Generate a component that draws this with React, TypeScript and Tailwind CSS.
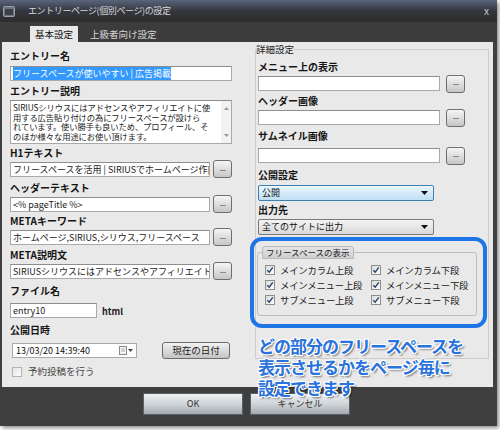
import type { ReactNode } from 'react'

const FONT = "font-['Noto_Sans_CJK_JP','Noto_Sans',sans-serif]"

function Label({ children, className = '' }: { children: ReactNode; className?: string }) {
	return <div className={`h-[14px] text-[10px] font-bold leading-[14px] text-[#151515] ${className}`}>{children}</div>
}

function TextBox({ children, className = '' }: { children?: ReactNode; className?: string }) {
	return (
		<div
			className={`h-[15px] overflow-hidden whitespace-nowrap border border-[#a9a9a9] border-t-[#8e8e8e] bg-white px-[2px] text-[9px] leading-[13px] text-[#1a1a1a] ${className}`}
		>
			{children}
		</div>
	)
}

function DotsButton() {
	return (
		<div className="flex h-[18px] w-[19px] shrink-0 items-center justify-center rounded-[3px] border border-[#6e6e6e] bg-linear-to-b from-[#f6f6f6] to-[#c6c6c6]">
			<span className="mt-[2px] h-px w-[6px] bg-[#8a8a8a]" />
		</div>
	)
}

function Check({ checked = true }: { checked?: boolean }) {
	return (
		<span className="flex h-[10px] w-[10px] shrink-0 items-center justify-center border border-[#8e8e8e] bg-linear-to-br from-[#dadada] to-white">
			{checked && (
				<svg width="8" height="8" viewBox="0 0 8 8">
					<path d="M1.3 4.2 L3.2 6.2 L6.8 1.4" fill="none" stroke="#2b3f6b" strokeWidth="1.4" />
				</svg>
			)}
		</span>
	)
}

function CheckItem({ label }: { label: string }) {
	return (
		<div className="flex items-center gap-[5px] whitespace-nowrap text-[9.4px] leading-[14px] tracking-[-0.2px] text-[#222]">
			<Check />
			{label}
		</div>
	)
}

function Select({ value, active = false }: { value: string; active?: boolean }) {
	return (
		<div
			className={`flex h-[16px] w-[176px] items-center justify-between rounded-[2px] border px-[3px] text-[9px] leading-[14px] text-[#111] ${
				active
					? 'border-[#3c7fb1] bg-linear-to-b from-[#eaf6fd] to-[#bfe0f5]'
					: 'border-[#7a7a7a] bg-linear-to-b from-[#f4f4f4] to-[#d9d9d9]'
			}`}
		>
			<span>{value}</span>
			<svg width="7" height="4" viewBox="0 0 7 4" className="mr-[2px]">
				<path d="M0 0 H7 L3.5 4 Z" fill="#111" />
			</svg>
		</div>
	)
}

function LeftColumn() {
	return (
		<div className="flex w-[222px] shrink-0 flex-col pt-[7px]">
			<Label>エントリー名</Label>
			<TextBox className="mt-[3px]">
				<span className="bg-[#3399ff] text-white">フリースペースが使いやすい | 広告掲載</span>
			</TextBox>

			<Label className="mt-[3px]">エントリー説明</Label>
			<div className="mt-[2px] flex h-[44px] border border-[#a9a9a9] border-t-[#8e8e8e] bg-white">
				<div className="flex-1 overflow-hidden whitespace-nowrap pl-[2px] pt-[2px] text-[8.3px] leading-[9.6px] tracking-[-0.1px] text-[#1a1a1a]">
					<div>SIRIUSシリウスにはアドセンスやアフィリエイトに使</div>
					<div>用する広告貼り付けの為にフリースペースが設けら</div>
					<div>れています。使い勝手も良いため、プロフィール、そ</div>
					<div>のほか様々な用途にお使い頂けます。</div>
				</div>
				<div className="flex w-[10px] shrink-0 flex-col items-center justify-between bg-[#f2f2f2] py-[6px]">
					<svg width="5" height="3" viewBox="0 0 5 3">
						<path d="M0 3 H5 L2.5 0 Z" fill="#9a9a9a" />
					</svg>
					<svg width="5" height="3" viewBox="0 0 5 3">
						<path d="M0 0 H5 L2.5 3 Z" fill="#9a9a9a" />
					</svg>
				</div>
			</div>

			<Label className="mt-[2px]">H1テキスト</Label>
			<div className="flex h-[18px] items-center justify-between">
				<TextBox className="w-[200px]">フリースペースを活用 | SIRIUSでホームページ作[</TextBox>
				<DotsButton />
			</div>

			<Label className="mt-[3px]">ヘッダーテキスト</Label>
			<div className="flex h-[18px] items-center justify-between">
				<TextBox className="w-[200px]">{'<% pageTitle %>'}</TextBox>
				<DotsButton />
			</div>

			<Label className="mt-[1px]">METAキーワード</Label>
			<div className="flex h-[18px] items-center justify-between">
				<TextBox className="w-[200px]">ホームページ,SIRIUS,シリウス,フリースペース</TextBox>
				<DotsButton />
			</div>

			<Label className="mt-[2px]">META説明文</Label>
			<div className="flex h-[18px] items-center justify-between">
				<TextBox className="w-[200px]">SIRIUSシリウスにはアドセンスやアフィリエイトに使</TextBox>
				<DotsButton />
			</div>

			<Label className="mt-[4px]">ファイル名</Label>
			<div className="mt-[4px] flex items-center gap-[5px]">
				<TextBox className="w-[87px]">entry10</TextBox>
				<span className="pt-[3px] text-[9px] font-bold text-[#222]">html</span>
			</div>

			<Label className="mt-[4px]">公開日時</Label>
			<div className="mt-[5px] flex h-[18px] items-center">
				<div className="ml-[2px] flex h-[15px] w-[125px] items-center justify-between border border-[#a9a9a9] bg-white pl-[3px] pr-[3px] text-[9px] leading-[13px] text-[#111]">
					<span>13/03/20 14:39:40</span>
					<span className="flex items-center gap-[1px]">
						<svg width="8" height="9" viewBox="0 0 8 9">
							<rect x="0.5" y="0.5" width="7" height="8" fill="#f4f4f4" stroke="#8a8a8a" />
							<path d="M2 3 H6 M2 5 H6" stroke="#b0b0b0" />
						</svg>
						<svg width="5" height="3" viewBox="0 0 5 3">
							<path d="M0 0 H5 L2.5 3 Z" fill="#444" />
						</svg>
					</span>
				</div>
				<div className="ml-[25px] flex h-[17px] w-[68px] items-center justify-center rounded-[3px] border border-[#6c6c6c] bg-linear-to-b from-[#f2f2f2] to-[#c4c4c4] text-[9.5px] text-[#222]">
					現在の日付
				</div>
			</div>

			<div className="mt-[5px] flex h-[14px] items-center gap-[6px] pl-[2px] text-[9.5px] text-[#444]">
				<span className="h-[10px] w-[10px] border border-[#b4b4b4] bg-linear-to-br from-[#e2e2e2] to-white" />
				予約投稿を行う
			</div>
		</div>
	)
}

function RightColumn() {
	return (
		<fieldset className="ml-[23px] mt-[1px] h-[316px] w-[234px] border border-[#cdcdcd] pl-[2px]">
			<legend className="ml-[-2px] px-0 text-[9.5px] leading-[12px] text-[#222]">詳細設定</legend>
			<div className="flex flex-col pt-[5px]">
				<Label>メニュー上の表示</Label>
				<div className="flex h-[19px] items-center">
					<TextBox className="w-[182px]" />
					<span className="ml-[6px]">
						<DotsButton />
					</span>
				</div>

				<Label className="mt-px">ヘッダー画像</Label>
				<div className="flex h-[19px] items-center">
					<TextBox className="w-[182px]" />
					<span className="ml-[6px]">
						<DotsButton />
					</span>
				</div>

				<Label className="mt-[2px]">サムネイル画像</Label>
				<div className="mt-[3px] flex h-[19px] items-center">
					<TextBox className="w-[182px]" />
					<span className="ml-[6px]">
						<DotsButton />
					</span>
				</div>

				<Label className="mt-[3px]">公開設定</Label>
				<div className="mt-[3px]">
					<Select value="公開" active />
				</div>

				<Label className="mt-[2px]">出力先</Label>
				<div className="mt-[2px]">
					<Select value="全てのサイトに出力" />
				</div>

				<div className="-ml-[8px] mt-[2px] h-[91px] w-[237px] rounded-[12px] border-4 border-[#1f74e6] pl-[3px] pt-[5px]">
					<fieldset className="h-[70px] w-[220px] rounded-[3px] border border-[#bdbdbd] pl-[7px] pt-[4px]">
						<legend className="ml-[-3px] rounded-t-[3px] border border-[#b9b9b9] bg-linear-to-b from-[#e4e4e4] to-[#cfcfcf] px-[3px] text-[8.5px] leading-[11px] text-[#222]">
							フリースペースの表示
						</legend>
						<div className="grid grid-cols-[106px_1fr] gap-y-[1px]">
							<CheckItem label="メインカラム上段" />
							<CheckItem label="メインカラム下段" />
							<CheckItem label="メインメニュー上段" />
							<CheckItem label="メインメニュー下段" />
							<CheckItem label="サブメニュー上段" />
							<CheckItem label="サブメニュー下段" />
						</div>
					</fieldset>
				</div>
			</div>
		</fieldset>
	)
}

export default function App() {
	return (
		<div className={`relative h-[430px] w-[500px] overflow-hidden bg-white ${FONT}`}>
			<div className="flex h-[426px] w-[497px] flex-col bg-[#3f3f3f] shadow-[2px_2px_4px_rgba(0,0,0,0.45)]">
				{/* title bar */}
				<div className="flex h-[22px] items-center bg-linear-to-b from-[#5a647c] via-[#34373e] to-[#2c2c2c] pl-[3px] pr-[8px]">
					<svg width="12" height="11" viewBox="0 0 12 11">
						<rect x="0.5" y="0.5" width="11" height="10" rx="1" fill="#6d7380" stroke="#9aa0aa" />
						<rect x="2" y="3" width="8" height="6" fill="#3b3f48" />
					</svg>
					<span className="ml-[13px] text-[9px] tracking-[-0.4px] text-[#d8d8d8]">エントリーページ(個別ページ)の設定</span>
					<span className="ml-auto text-[10px] leading-none text-[#c8c8c8]">x</span>
				</div>

				{/* tabs */}
				<div className="flex h-[20px] items-end bg-[#3c3c3c] pl-[30px]">
					<div className="flex h-[16px] w-[48px] items-center justify-center bg-[#e9e9e9] text-[9.5px] text-[#111]">
						基本設定
					</div>
					<div className="ml-[12px] flex h-[16px] items-center text-[9.5px] text-[#d6d6d6]">上級者向け設定</div>
				</div>

				{/* content */}
				<div className="ml-[2px] flex h-[345px] w-[491px] bg-[#e9e9e9] pl-[8px]">
					<LeftColumn />
					<RightColumn />
				</div>

				{/* bottom buttons */}
				<div className="flex flex-1 items-start gap-[7px] pl-[143px] pt-[6px]">
					<div className="flex h-[22px] w-[100px] items-center justify-center border border-[#5c6064] bg-linear-to-b from-[#eef1f3] via-[#cfd4d8] to-[#a3aab0] text-[9px] text-[#333]">
						OK
					</div>
					<div className="flex h-[22px] w-[100px] items-center justify-center border border-[#5c6064] bg-linear-to-b from-[#eef1f3] via-[#cfd4d8] to-[#a3aab0] text-[9px] text-[#333]">
						キャンセル
					</div>
				</div>
			</div>

			{/* annotation over the dialog */}
			<div className="absolute left-[258px] top-[335px] text-[17px] font-bold leading-[21px] tracking-[-1px] text-[#2a72dc] [text-shadow:1px_1px_0_#fff,-1px_-1px_0_#fff,1px_-1px_0_#fff,-1px_1px_0_#fff,0_1px_0_#fff,0_-1px_0_#fff,1px_0_0_#fff,-1px_0_0_#fff,2px_2px_2px_rgba(0,0,0,0.5)]">
				<div>どの部分のフリースペースを</div>
				<div>表示させるかをページ毎に</div>
				<div>設定できます</div>
			</div>
		</div>
	)
}
